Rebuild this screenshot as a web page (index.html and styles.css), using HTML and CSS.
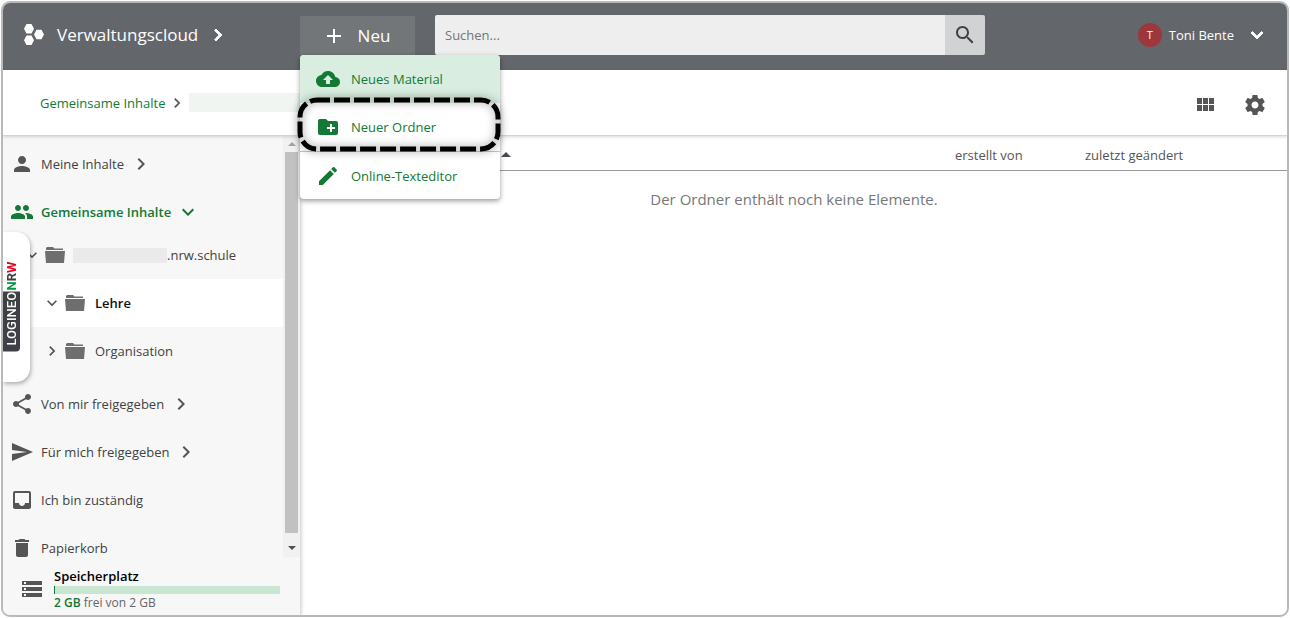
FILE: index.html
```html
<!DOCTYPE html>
<html lang="de">
<head>
<meta charset="utf-8">
<meta name="viewport" content="width=device-width, initial-scale=1">
<title>Verwaltungscloud</title>
<link rel="stylesheet" href="styles.css">
</head>
<body>
<svg class="sprite" aria-hidden="true">
  <symbol id="i-right" viewBox="0 0 24 24"><path d="M10 6L8.59 7.41 13.17 12l-4.58 4.59L10 18l6-6z"/></symbol>
  <symbol id="i-down" viewBox="0 0 24 24"><path d="M16.59 8.59L12 13.17 7.41 8.59 6 10l6 6 6-6z"/></symbol>
  <symbol id="i-add" viewBox="0 0 24 24"><path d="M19 13h-6v6h-2v-6H5v-2h6V5h2v6h6v2z"/></symbol>
  <symbol id="i-search" viewBox="0 0 24 24"><path d="M15.5 14h-.79l-.28-.27C15.41 12.59 16 11.11 16 9.5 16 5.91 13.09 3 9.5 3S3 5.91 3 9.5 5.91 16 9.5 16c1.61 0 3.09-.59 4.23-1.57l.27.28v.79l5 4.99L20.49 19l-4.99-5zm-6 0C7.01 14 5 11.99 5 9.5S7.01 5 9.5 5 14 7.01 14 9.5 11.99 14 9.5 14z"/></symbol>
  <symbol id="i-upload" viewBox="0 0 24 24"><path d="M19.35 10.04C18.67 6.59 15.64 4 12 4 9.11 4 6.6 5.64 5.35 8.04 2.34 8.36 0 10.91 0 14c0 3.31 2.69 6 6 6h13c2.76 0 5-2.24 5-5 0-2.64-2.05-4.78-4.65-4.96zM14 13v4h-4v-4H7l5-5 5 5h-3z"/></symbol>
  <symbol id="i-newfolder" viewBox="0 0 24 24"><path d="M20 6h-8l-2-2H4c-1.11 0-1.99.89-1.99 2L2 18c0 1.11.89 2 2 2h16c1.11 0 2-.89 2-2V8c0-1.11-.89-2-2-2zm-1 8h-3v3h-2v-3h-3v-2h3V9h2v3h3v2z"/></symbol>
  <symbol id="i-edit" viewBox="0 0 24 24"><path d="M3 17.25V21h3.75L17.81 9.94l-3.75-3.75L3 17.25zM20.71 7.04c.39-.39.39-1.02 0-1.41l-2.34-2.34c-.39-.39-1.02-.39-1.41 0l-1.83 1.83 3.75 3.75 1.83-1.83z"/></symbol>
  <symbol id="i-grid" viewBox="0 0 24 24"><path d="M4 11h5V5H4v6zm0 7h5v-6H4v6zm6 0h5v-6h-5v6zm6 0h5v-6h-5v6zm-6-7h5V5h-5v6zm6-6v6h5V5h-5z"/></symbol>
  <symbol id="i-gear" viewBox="0 0 24 24"><path d="M19.43 12.98c.04-.32.07-.64.07-.98s-.03-.66-.07-.98l2.11-1.65c.19-.15.24-.42.12-.64l-2-3.46c-.12-.22-.39-.3-.61-.22l-2.49 1c-.52-.4-1.08-.73-1.69-.98l-.38-2.65C14.46 2.18 14.25 2 14 2h-4c-.25 0-.46.18-.49.42l-.38 2.65c-.61.25-1.17.59-1.69.98l-2.49-1c-.23-.09-.49 0-.61.22l-2 3.46c-.13.22-.07.49.12.64l2.11 1.65c-.04.32-.07.65-.07.98s.03.66.07.98l-2.11 1.65c-.19.15-.24.42-.12.64l2 3.46c.12.22.39.3.61.22l2.49-1c.52.4 1.08.73 1.69.98l.38 2.65c.03.24.24.42.49.42h4c.25 0 .46-.18.49-.42l.38-2.65c.61-.25 1.17-.59 1.69-.98l2.49 1c.23.09.49 0 .61-.22l2-3.46c.12-.22.07-.49-.12-.64l-2.11-1.65zM12 15.5c-1.93 0-3.5-1.57-3.5-3.5s1.57-3.5 3.5-3.5 3.5 1.57 3.5 3.5-1.57 3.5-3.5 3.5z"/></symbol>
  <symbol id="i-person" viewBox="0 0 24 24"><path d="M12 12c2.21 0 4-1.79 4-4s-1.79-4-4-4-4 1.79-4 4 1.79 4 4 4zm0 2c-2.67 0-8 1.34-8 4v2h16v-2c0-2.66-5.33-4-8-4z"/></symbol>
  <symbol id="i-group" viewBox="0 0 24 24"><path d="M16 11c1.66 0 2.99-1.34 2.99-3S17.66 5 16 5c-1.66 0-3 1.34-3 3s1.34 3 3 3zm-8 0c1.66 0 2.99-1.34 2.99-3S9.66 5 8 5C6.34 5 5 6.34 5 8s1.34 3 3 3zm0 2c-2.33 0-7 1.17-7 3.5V19h14v-2.500c0-2.330-4.670-3.500-7-3.500zm8 0c-.29 0-.62.02-.97.05 1.160.840 1.970 1.970 1.970 3.450V19h6v-2.500c0-2.330-4.670-3.500-7-3.500z"/></symbol>
  <symbol id="i-folder" viewBox="0 0 24 24"><path d="M4 4h6l1.500 1.500h8.500v1.500H3V5zM2 8h20l-1 12H3z"/></symbol>
  <symbol id="i-share" viewBox="0 0 24 24"><path d="M18 16.080c-.76 0-1.440.3-1.960.77L8.910 12.700c.05-.23.09-.46.09-.7s-.04-.47-.09-.7l7.050-4.110c.54.5 1.250.81 2.040.81 1.660 0 3-1.340 3-3s-1.340-3-3-3-3 1.340-3 3c0 .24.04.47.09.7L8.040 9.810C7.500 9.310 6.790 9 6 9c-1.660 0-3 1.340-3 3s1.340 3 3 3c.79 0 1.500-.31 2.040-.81l7.120 4.160c-.05.21-.08.43-.08.65 0 1.610 1.310 2.920 2.920 2.920s2.920-1.310 2.920-2.920-1.310-2.920-2.920-2.920z"/></symbol>
  <symbol id="i-send" viewBox="0 0 24 24"><path d="M2.010 21L23 12 2.010 3 2 10l15 2-15 2z"/></symbol>
  <symbol id="i-inbox" viewBox="0 0 24 24"><path d="M19 3H4.990c-1.110 0-1.980.89-1.980 2L3 19c0 1.100.88 2 1.990 2H19c1.100 0 2-.9 2-2V5c0-1.110-.9-2-2-2zm0 12h-4c0 1.660-1.350 3-3 3s-3-1.340-3-3H4.990V5H19v10z"/></symbol>
  <symbol id="i-trash" viewBox="0 0 24 24"><path d="M6 19c0 1.100.9 2 2 2h8c1.100 0 2-.9 2-2V7H6v12zM19 4h-3.500l-1-1h-5l-1 1H5v2h14V4z"/></symbol>
  <symbol id="i-storage" viewBox="0 0 24 24"><path d="M2 20h20v-4H2v4zm2-3h2v2H4v-2zM2 4v4h20V4H2zm4 3H4V5h2v2zm-4 7h20v-4H2v4zm2-3h2v2H4v-2z"/></symbol>
</svg>

<div class="app">
  <header class="topbar">
    <button class="brand" type="button">
      <svg class="brand-logo" viewBox="0 0 22 24" aria-hidden="true"><path d="M3.500 1h5l2.500 4.700L8.500 10.500h-5L1 5.700zM3.500 12.500h5l2.500 4.800L8.500 22h-5L1 17.300zM13.500 6.800h5l2.500 4.700-2.500 4.800h-5L11 11.500z"/></svg>
      <span>Verwaltungscloud</span>
      <svg class="icon heavy"><use href="#i-right"/></svg>
    </button>
    <div class="create">
      <button class="create-button" type="button" aria-haspopup="menu" aria-expanded="true">
        <svg class="icon"><use href="#i-add"/></svg><span>Neu</span>
      </button>
      <div class="menu" role="menu">
        <button class="menu-item active" type="button" role="menuitem"><svg class="icon"><use href="#i-upload"/></svg>Neues Material</button>
        <button class="menu-item" type="button" role="menuitem"><svg class="icon"><use href="#i-newfolder"/></svg>Neuer Ordner</button>
        <button class="menu-item divided" type="button" role="menuitem"><svg class="icon"><use href="#i-edit"/></svg>Online-Texteditor</button>
        <svg class="marker" viewBox="0 0 204 56" aria-hidden="true">
          <defs><filter id="soft" x="-10%" y="-30%" width="120%" height="160%"><feGaussianBlur stdDeviation="4"/></filter></defs>
          <rect class="marker-glow" x="3" y="4" width="198" height="49" rx="17"/>
          <rect class="marker-line" x="3" y="4" width="198" height="49" rx="17"/>
        </svg>
      </div>
    </div>
    <form class="search">
      <input class="search-input" type="search" placeholder="Suchen..." aria-label="Suchen">
      <button class="search-button" type="button" aria-label="Suche starten"><svg class="icon"><use href="#i-search"/></svg></button>
    </form>
    <button class="user" type="button">
      <span class="avatar">T</span><span>Toni Bente</span>
      <svg class="icon heavy"><use href="#i-down"/></svg>
    </button>
  </header>

  <div class="toolbar">
    <nav class="crumbs" aria-label="Pfad">
      <a href="#">Gemeinsame Inhalte</a>
      <svg class="icon"><use href="#i-right"/></svg>
      <span class="crumb-hidden"></span>
    </nav>
    <div class="tools">
      <button class="tool" type="button" aria-label="Kachelansicht"><svg class="icon"><use href="#i-grid"/></svg></button>
      <button class="tool" type="button" aria-label="Einstellungen"><svg class="icon"><use href="#i-gear"/></svg></button>
    </div>
  </div>

  <div class="body">
    <aside class="sidebar">
      <div class="scroll-area">
        <nav class="nav" aria-label="Ablage">
          <a class="nav-item" href="#"><svg class="icon"><use href="#i-person"/></svg><span>Meine Inhalte</span><svg class="icon arrow"><use href="#i-right"/></svg></a>
          <a class="nav-item current" href="#"><svg class="icon"><use href="#i-group"/></svg><span>Gemeinsame Inhalte</span><svg class="icon arrow"><use href="#i-down"/></svg></a>
          <div class="tree">
            <a class="tree-item" href="#"><svg class="icon small"><use href="#i-down"/></svg><svg class="icon folder"><use href="#i-folder"/></svg><span class="name-hidden"></span><span>.nrw.schule</span></a>
            <a class="tree-item child selected" href="#"><svg class="icon small"><use href="#i-down"/></svg><svg class="icon folder"><use href="#i-folder"/></svg><span class="label">Lehre</span></a>
            <a class="tree-item child" href="#"><svg class="icon small"><use href="#i-right"/></svg><svg class="icon folder"><use href="#i-folder"/></svg><span class="label">Organisation</span></a>
          </div>
          <a class="nav-item" href="#"><svg class="icon"><use href="#i-share"/></svg><span>Von mir freigegeben</span><svg class="icon arrow"><use href="#i-right"/></svg></a>
          <a class="nav-item" href="#"><svg class="icon"><use href="#i-send"/></svg><span>Für mich freigegeben</span><svg class="icon arrow"><use href="#i-right"/></svg></a>
          <a class="nav-item" href="#"><svg class="icon"><use href="#i-inbox"/></svg><span>Ich bin zuständig</span></a>
          <a class="nav-item" href="#"><svg class="icon"><use href="#i-trash"/></svg><span>Papierkorb</span></a>
        </nav>
        <div class="scrollbar" aria-hidden="true">
          <span class="scroll-end up"></span>
          <span class="thumb"></span>
          <span class="scroll-end down"></span>
        </div>
      </div>
      <div class="storage">
        <svg class="icon"><use href="#i-storage"/></svg>
        <div class="storage-info">
          <div class="storage-title">Speicherplatz</div>
          <div class="storage-bar"></div>
          <div class="storage-text"><b>2 GB</b> frei von 2 GB</div>
        </div>
      </div>
      <div class="side-tab"><div class="side-logo"><span class="logineo">LOGINEO</span><span class="nrw"><span class="n">N</span>R<span class="w">W</span></span></div></div>
    </aside>

    <main class="content">
      <table class="files">
        <thead>
          <tr><th class="col-name" aria-sort="ascending"><span class="sort"></span></th><th class="col-creator">erstellt von</th><th class="col-changed">zuletzt geändert</th></tr>
        </thead>
        <tbody>
          <tr><td class="empty" colspan="3">Der Ordner enthält noch keine Elemente.</td></tr>
        </tbody>
      </table>
    </main>
  </div>
</div>
</body>
</html>
```

FILE: styles.css
```css
* { box-sizing: border-box; }

body {
  margin: 0;
  padding: 1px;
  height: 100vh;
  background: #fff;
  color: #424242;
  font: 13px/20px "Open Sans", "Noto Sans", sans-serif;
}

button {
  border: 0;
  padding: 0;
  background: none;
  color: inherit;
  font: inherit;
  cursor: pointer;
}

a { color: inherit; text-decoration: none; }

.sprite { display: none; }

.icon {
  flex: none;
  display: block;
  width: 24px;
  height: 24px;
  fill: currentColor;
}

.heavy { stroke: currentColor; stroke-width: 1; }

.app {
  display: flex;
  flex-direction: column;
  height: 100%;
  border: 2px solid #b9b9b9;
  border-radius: 9px;
  overflow: hidden;
}

/* Top bar */
.topbar {
  display: flex;
  align-items: center;
  flex: none;
  height: 67px;
  padding-bottom: 3px;
  background: #63666b;
  color: #fff;
}

.brand {
  display: flex;
  align-items: center;
  width: 297px;
  padding-left: 20px;
  font-size: 17px;
  font-weight: 500;
}

.brand-logo { width: 22px; height: 24px; margin-right: 12px; fill: #fff; }
.brand .icon { margin-left: 8px; }

.create { position: relative; flex: none; padding-top: 1px; }

.create-button {
  display: flex;
  align-items: center;
  justify-content: center;
  gap: 12px;
  width: 115px;
  height: 39px;
  padding-right: 3px;
  background: #727679;
  font-size: 17px;
  font-weight: 500;
}

.menu {
  position: absolute;
  z-index: 3;
  top: 100%;
  left: 0;
  width: 200px;
  border-radius: 4px;
  background: #fff;
  box-shadow: 0 2px 5px rgba(0, 0, 0, .4);
}

.menu-item {
  display: flex;
  align-items: center;
  gap: 11px;
  width: 100%;
  height: 48px;
  padding-left: 16px;
  color: #127a35;
}

.menu-item.active { border-radius: 4px 4px 0 0; background: #d9eee0; }
.menu-item.divided { border-top: 1px solid #c4c4c4; }

.marker {
  position: absolute;
  top: 41px;
  left: -3px;
  width: 204px;
  height: 56px;
  overflow: visible;
  pointer-events: none;
}

.marker-glow { fill: none; stroke: rgba(0, 0, 0, .3); stroke-width: 6; filter: url(#soft); }
.marker-line { fill: none; stroke: #000; stroke-width: 5; stroke-dasharray: 16 4; stroke-dashoffset: 3; }

.search {
  display: flex;
  flex: 0 1 550px;
  height: 40px;
  margin-left: 20px;
}

.search-input {
  flex: 1;
  min-width: 0;
  border: 0;
  border-radius: 2px 0 0 2px;
  padding: 0 10px;
  background: #eee;
  color: #424242;
  font: inherit;
}

.search-input::placeholder { color: #757575; }

.search-button {
  display: flex;
  align-items: center;
  justify-content: center;
  width: 40px;
  border-radius: 0 2px 2px 0;
  background: #d1d2d3;
  color: #424242;
}

.user {
  display: flex;
  align-items: center;
  margin-left: auto;
  padding-right: 18px;
  font-weight: 500;
}

.avatar {
  width: 24px;
  height: 24px;
  margin-right: 7px;
  border-radius: 50%;
  background: #9c373b;
  font-size: 11px;
  line-height: 24px;
}

.user .icon { margin-left: 11px; }

/* Path and view tools */
.toolbar {
  position: relative;
  z-index: 1;
  display: flex;
  align-items: center;
  justify-content: space-between;
  flex: none;
  height: 66px;
  padding: 0 20px 0 37px;
  border-bottom: 1px solid #d5d5d5;
  background: #fff;
  box-shadow: 0 1px 3px rgba(0, 0, 0, .15);
}

.crumbs { display: flex; align-items: center; color: #127a35; }
.crumbs .icon { width: 20px; height: 20px; margin: 0 2px 0 1px; color: #555; }
.crumb-hidden { width: 111px; height: 19px; background: #f0f5f2; }
.tools { display: flex; gap: 26px; padding-top: 4px; color: #555; }

/* Sidebar */
.body { display: flex; flex: 1; min-height: 0; }

.sidebar {
  position: relative;
  display: flex;
  flex: none;
  flex-direction: column;
  width: 298px;
  border-right: 1px solid #ddd;
  background: #f7f7f7;
  box-shadow: 1px 0 3px rgba(0, 0, 0, .15);
}

.scroll-area { display: flex; flex: 1; min-height: 0; overflow: hidden; }
.nav { flex: 1; min-width: 0; padding-top: 4px; }

.nav-item {
  display: flex;
  align-items: center;
  height: 48px;
  padding-left: 7px;
}

.nav-item .icon { color: #555; }
.nav-item span { margin-left: 7px; }
.nav-item .arrow { margin-left: 5px; }
.nav-item.current, .nav-item.current .icon { color: #127a35; }
.nav-item.current { font-weight: 600; }

.tree { margin: -5px 0 5px; }

.tree-item {
  display: flex;
  align-items: center;
  height: 48px;
  padding-left: 19px;
}

.tree-item.child { padding-left: 39px; }
.tree-item.selected { background: #fff; color: #111; font-weight: 600; }
.small { width: 20px; height: 20px; color: #555; }
.folder { margin-left: 1px; color: #6e6e6e; }
.name-hidden { width: 94px; height: 15px; margin-left: 6px; background: #eaeaea; }
.tree-item .label { margin-left: 8px; }

.scrollbar {
  display: flex;
  flex-direction: column;
  align-items: center;
  width: 17px;
  background: #f1f1f1;
}

.scroll-end {
  display: flex;
  align-items: center;
  justify-content: center;
  width: 17px;
  height: 16px;
}

.scroll-end.down { height: 18px; }
.scroll-end::before { content: ""; border: 4px solid transparent; }
.scroll-end.up::before { border-top-width: 0; border-bottom-color: #a3a3a3; }
.scroll-end.down::before { border-bottom-width: 0; border-top-color: #505050; }
.thumb { flex: 1; width: 13px; margin-bottom: 6px; background: #c1c1c1; }

.storage {
  display: flex;
  align-items: center;
  flex: none;
  gap: 10px;
  padding: 10px 20px 4px 17px;
}

.storage .icon { color: #555; }
.storage-info { flex: 1; font-size: 12px; line-height: 17px; }
.storage-title { color: #000; font-size: 13px; font-weight: 600; line-height: 19px; }
.storage-bar { height: 8px; border-left: 1px solid #127a35; background: #c8e6d2; }
.storage-text { color: #666; }
.storage-text b { color: #127a35; font-weight: 600; }

.side-tab {
  position: absolute;
  z-index: 2;
  top: 96px;
  left: 0;
  display: flex;
  align-items: flex-end;
  width: 27px;
  height: 150px;
  padding-bottom: 30px;
  border-radius: 0 14px 14px 0;
  background: #fff;
  box-shadow: 1px 2px 4px rgba(0, 0, 0, .3);
}

.side-logo {
  display: flex;
  font: 500 13px/17px Roboto, sans-serif;
  writing-mode: vertical-rl;
  transform: rotate(180deg);
}

.logineo { padding-top: 6px; border-radius: 4px 0 0 0; background: #3f4045; color: #fff; }
.nrw { padding-top: 1px; color: #3f4045; font-weight: 700; }
.n { color: #009a3e; }
.w { color: #e2001a; }

/* File list */
.content { flex: 1; min-width: 0; }
.files { width: 100%; border-collapse: collapse; table-layout: fixed; }

.files th {
  height: 34px;
  padding: 4px 0 0;
  border-bottom: 1px solid #999;
  color: #555;
  font-weight: 400;
  text-align: left;
}

.col-creator { width: 130px; }
.col-changed { width: 202px; }

.sort {
  display: block;
  width: 0;
  margin-left: 200px;
  border: 5px solid transparent;
  border-top-width: 0;
  border-bottom-color: #4a4a55;
}

.files .empty {
  padding: 18px 0;
  color: #777;
  font-size: 15px;
  text-align: center;
}
```
